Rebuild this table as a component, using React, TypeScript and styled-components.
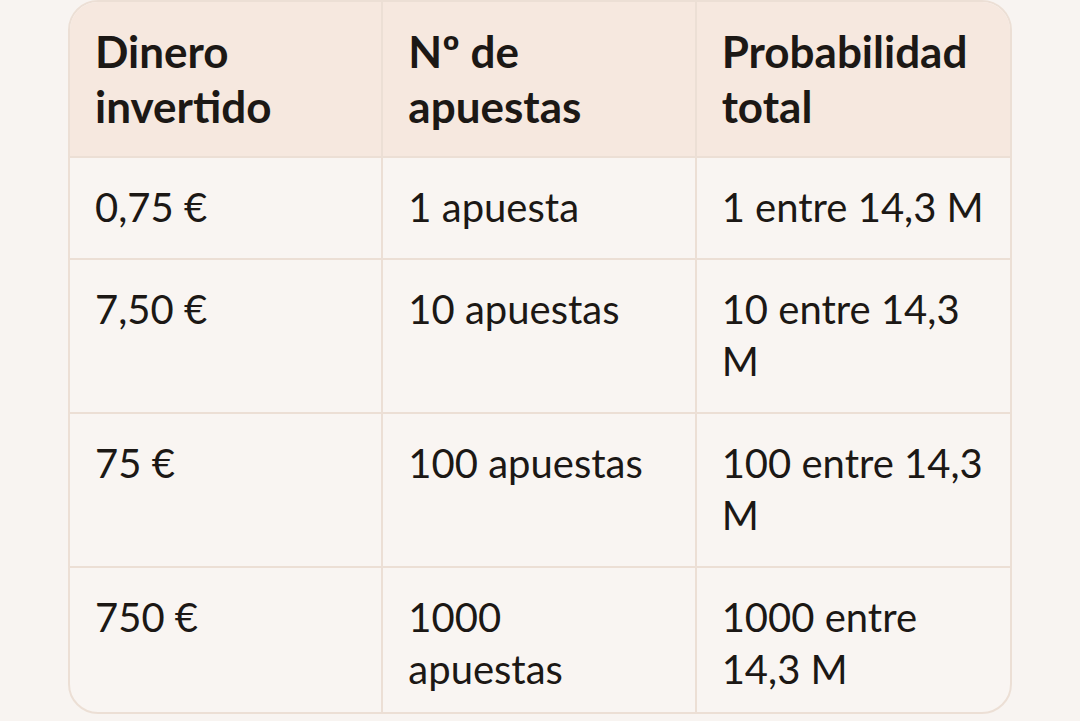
import React from "react";
import styled, { createGlobalStyle } from "styled-components";

const Global = createGlobalStyle`
  html, body { margin: 0; padding: 0; background: #f8f4f1; }
  body { font-family: Lato, "Noto Sans", sans-serif; color: #1c1815; }
`;

const Page = styled.div`
  padding: 0 68px;
`;

const Frame = styled.div`
  border: 2px solid #ecdfd5;
  border-radius: 30px;
  overflow: hidden;
  background: #f9f5f2;
`;

const Table = styled.table`
  width: 100%;
  border-collapse: separate;
  border-spacing: 0;
  table-layout: fixed;
`;

const Head = styled.th`
  background: #f6e8df;
  text-align: left;
  vertical-align: top;
  font-weight: 700;
  font-size: 44px;
  line-height: 55px;
  padding: 22px 24px 22px 25px;
  border-bottom: 2px solid #ecdfd5;
  border-right: 2px solid #ecdfd5;
  &:last-child { border-right: none; }
`;

const Cell = styled.td<{ $last?: boolean; $narrow?: boolean }>`
  text-align: left;
  vertical-align: top;
  font-weight: 400;
  font-size: 40px;
  line-height: 52px;
  padding: 23px ${(p) => (p.$narrow ? "40px" : "24px")}
    ${(p) => (p.$last ? "17px" : "25px")} 25px;
  border-bottom: ${(p) => (p.$last ? "none" : "2px solid #ecdfd5")};
  border-right: 2px solid #ecdfd5;
  &:last-child { border-right: none; }
`;

const rows = [
  ["0,75 €", "1 apuesta", "1 entre 14,3 M"],
  ["7,50 €", "10 apuestas", "10 entre 14,3 M"],
  ["75 €", "100 apuestas", "100 entre 14,3 M"],
  ["750 €", "1000 apuestas", "1000 entre 14,3 M"],
];

export default function App() {
  return (
    <Page>
      <Global />
      <Frame>
        <Table>
          <thead>
            <tr>
              <Head>Dinero invertido</Head>
              <Head>Nº de apuestas</Head>
              <Head>Probabilidad total</Head>
            </tr>
          </thead>
          <tbody>
            {rows.map((r, i) => (
              <tr key={i}>
                {r.map((c, j) => (
                  <Cell key={j} $last={i === rows.length - 1} $narrow={j === 1}>
                    {c}
                  </Cell>
                ))}
              </tr>
            ))}
          </tbody>
        </Table>
      </Frame>
    </Page>
  );
}
